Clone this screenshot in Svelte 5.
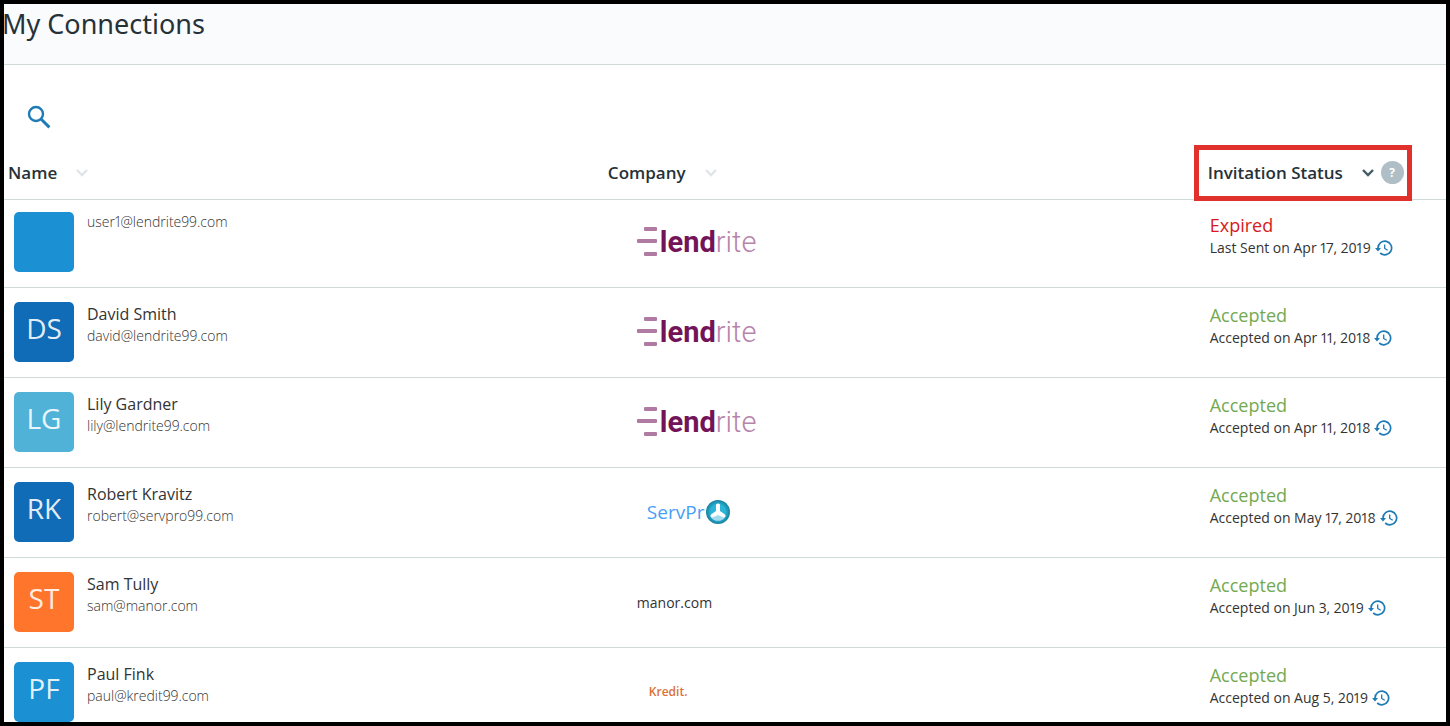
<script lang="ts">
  interface Connection {
    name: string;
    email: string;
    initials: string;
    color: string;
    company: string;
    status: 'Expired' | 'Accepted';
    detail: string;
  }

  const connections: Connection[] = [
    { name: '', email: 'user1@lendrite99.com', initials: '', color: '#1b91d3', company: 'lendrite', status: 'Expired', detail: 'Last Sent on Apr 17, 2019' },
    { name: 'David Smith', email: 'david@lendrite99.com', initials: 'DS', color: '#116cb7', company: 'lendrite', status: 'Accepted', detail: 'Accepted on Apr 11, 2018' },
    { name: 'Lily Gardner', email: 'lily@lendrite99.com', initials: 'LG', color: '#51b2d8', company: 'lendrite', status: 'Accepted', detail: 'Accepted on Apr 11, 2018' },
    { name: 'Robert Kravitz', email: 'robert@servpro99.com', initials: 'RK', color: '#116cb7', company: 'servpro', status: 'Accepted', detail: 'Accepted on May 17, 2018' },
    { name: 'Sam Tully', email: 'sam@manor.com', initials: 'ST', color: '#ff752b', company: 'manor.com', status: 'Accepted', detail: 'Accepted on Jun 3, 2019' },
    { name: 'Paul Fink', email: 'paul@kredit99.com', initials: 'PF', color: '#1b91d3', company: 'kredit', status: 'Accepted', detail: 'Accepted on Aug 5, 2019' },
  ];

  let sortKey = $state<'name' | 'company' | 'status'>('status');
</script>

{#snippet chevron()}
  <svg class="chevron" width="14" height="10" viewBox="0 0 14 10" fill="none" stroke="currentColor" stroke-width="2.4">
    <path d="M2 2l5 5 5-5" />
  </svg>
{/snippet}

<div class="page">
  <header class="title-bar">
    <h1>My Connections</h1>
  </header>

  <div class="toolbar">
    <button class="search" aria-label="Search">
      <svg width="24" height="24" viewBox="0 0 24 24" fill="none" stroke="currentColor" stroke-width="2.4">
        <circle cx="9" cy="9" r="7" />
        <path d="M14 14l8.4 8.4" stroke-width="3" />
      </svg>
    </button>
  </div>

  <table>
    <thead>
      <tr>
        <th class="col-name">
          <button class="sort" class:active={sortKey === 'name'} onclick={() => (sortKey = 'name')}>
            Name {@render chevron()}
          </button>
        </th>
        <th class="col-company">
          <button class="sort" class:active={sortKey === 'company'} onclick={() => (sortKey = 'company')}>
            Company {@render chevron()}
          </button>
        </th>
        <th class="col-status">
          <div class="highlight">
            <button class="sort" class:active={sortKey === 'status'} onclick={() => (sortKey = 'status')}>
              Invitation Status {@render chevron()}
            </button>
            <button class="help" aria-label="Help">?</button>
          </div>
        </th>
      </tr>
    </thead>
    <tbody>
      {#each connections as c (c.email)}
        <tr>
          <td>
            <div class="person">
              <div class="avatar" style="background:{c.color}">{c.initials}</div>
              <div class="who">
                {#if c.name}
                  <div class="name">{c.name}</div>
                {/if}
                <div class="email">{c.email}</div>
              </div>
            </div>
          </td>
          <td>
            <div class="company">
              {#if c.company === 'lendrite'}
                <div class="lendrite">
                  <svg width="20" height="36" viewBox="0 0 20 36" fill="#b07ba3">
                    <rect x="7" y="3" width="13" height="4" rx="1" />
                    <rect x="0" y="15" width="20" height="4" rx="1" />
                    <rect x="7" y="28" width="13" height="4" rx="1" />
                  </svg>
                  <div class="wordmark"><span class="lend">lend</span><span class="rite">rite</span></div>
                </div>
              {:else if c.company === 'servpro'}
                <div class="servpro">
                  <span>ServPr</span>
                  <svg width="24" height="24" viewBox="0 0 24 24">
                    <defs>
                      <radialGradient id="rim">
                        <stop offset="0.6" stop-color="#2db5d8" />
                        <stop offset="1" stop-color="#177f9f" />
                      </radialGradient>
                    </defs>
                    <circle cx="12" cy="12" r="12" fill="url(#rim)" />
                    <path d="M5 17.5l7-3.5 7 3.5a9 9 0 0 1-14 0z" fill="#a5dced" />
                    <path d="M10 4.5q2-2 4 0V11l5 3.5q1.5 2.5-1 3L12 15l-6 2.5q-2.5-.5-1-3l5-3.5z" fill="#fff" />
                  </svg>
                </div>
              {:else if c.company === 'kredit'}
                <div class="kredit">Kredit.</div>
              {:else}
                <div>{c.company}</div>
              {/if}
            </div>
          </td>
          <td>
            <div class="invite">
              <div class="status" class:expired={c.status === 'Expired'}>{c.status}</div>
              <div class="detail">
                {c.detail}
                <button class="history" aria-label="History">
                  <svg width="18" height="16" viewBox="0 0 18 16" fill="none" stroke="currentColor" stroke-width="1.7">
                    <path d="M3 8a6.8 6.8 0 1 1 2.2 5" />
                    <path d="M0 8h6l-3 3.5z" fill="currentColor" stroke="none" />
                    <path d="M9.7 4.5v4l3 1.8" stroke-width="1.3" />
                  </svg>
                </button>
              </div>
            </div>
          </td>
        </tr>
      {/each}
    </tbody>
  </table>
</div>

<style>
  :global(body) {
    background: #fff;
  }

  .page {
    box-sizing: border-box;
    height: 100vh;
    border: 4px solid #000;
    overflow: hidden;
    font-family: "Open Sans", sans-serif;
    font-size: 14px;
    font-variant-numeric: proportional-nums;
    color: #333;
  }

  button {
    padding: 0;
    border: none;
    background: none;
    font: inherit;
    color: inherit;
    cursor: pointer;
  }

  svg {
    display: block;
    flex-shrink: 0;
  }

  .title-bar {
    height: 60px;
    background: #fafbfd;
    border-bottom: 1px solid #cfdadb;
  }

  h1 {
    margin: 0 0 0 -2px;
    font-family: "Noto Sans", sans-serif;
    font-size: 27px;
    font-weight: 400;
    line-height: 40px;
    color: #263238;
  }

  .toolbar {
    padding: 40px 23px 17px;
  }

  .search {
    display: block;
    color: #1f7bb6;
  }

  table {
    width: 100%;
    table-layout: fixed;
    border-collapse: separate;
    border-spacing: 0;
  }

  th,
  td {
    box-sizing: border-box;
    border-bottom: 1px solid #cfdadb;
  }

  .col-name,
  .col-company {
    width: 41.6%;
  }

  th {
    height: 54px;
    padding: 0 4px;
    text-align: left;
    font-size: 17px;
    font-weight: 600;
    color: #263238;
  }

  .sort {
    display: flex;
    align-items: center;
    gap: 18px;
    white-space: nowrap;
  }

  .chevron {
    color: #dfe5e7;
  }

  .active .chevron {
    color: #455a64;
  }

  .highlight {
    display: flex;
    align-items: center;
    justify-content: space-between;
    box-sizing: border-box;
    width: 208px;
    height: 46px;
    margin: 0 -9px;
    padding: 0 3px 0 9px;
    outline: 5px solid #e0312d;
  }

  .help {
    width: 23px;
    height: 23px;
    border-radius: 50%;
    background: #b0bec5;
    color: #fff;
    font-size: 12px;
    font-weight: 700;
    line-height: 23px;
  }

  td {
    height: 90px;
    padding: 14px 0 0;
    vertical-align: top;
  }

  tbody tr:first-child td {
    height: 88px;
    padding-top: 12px;
  }

  .person {
    display: flex;
    gap: 13px;
    padding-left: 10px;
  }

  .avatar {
    width: 60px;
    height: 60px;
    border-radius: 5px;
    color: rgba(255, 255, 255, 0.9);
    font-size: 28px;
    line-height: 53px;
    text-align: center;
  }

  .name {
    font-size: 16px;
    line-height: 24px;
  }

  .email {
    font-weight: 300;
    line-height: 20px;
  }

  .company {
    display: flex;
    align-items: center;
    height: 60px;
    padding-left: 33px;
  }

  .lendrite {
    display: flex;
    align-items: center;
    gap: 3px;
  }

  .wordmark {
    font-family: Roboto, sans-serif;
    line-height: 36px;
    font-size: 29px;
  }

  .lend {
    font-weight: 700;
    color: #731459;
  }

  .rite {
    font-weight: 300;
    color: #b783ac;
  }

  .servpro {
    display: flex;
    align-items: center;
    gap: 2px;
    padding-left: 10px;
    font-size: 19px;
    color: #46a0f5;
  }

  .kredit {
    padding: 0 0 2px 12px;
    font-size: 12px;
    font-weight: 600;
    color: #d9733a;
  }

  .invite {
    padding: 1px 0 0 6px;
  }

  .status {
    font-size: 18px;
    line-height: 25px;
    color: #73a950;
  }

  .status.expired {
    color: #d71920;
  }

  .detail {
    display: flex;
    align-items: center;
    gap: 4px;
    line-height: 20px;
    white-space: nowrap;
  }

  .history {
    color: #1f7bb6;
  }
</style>
